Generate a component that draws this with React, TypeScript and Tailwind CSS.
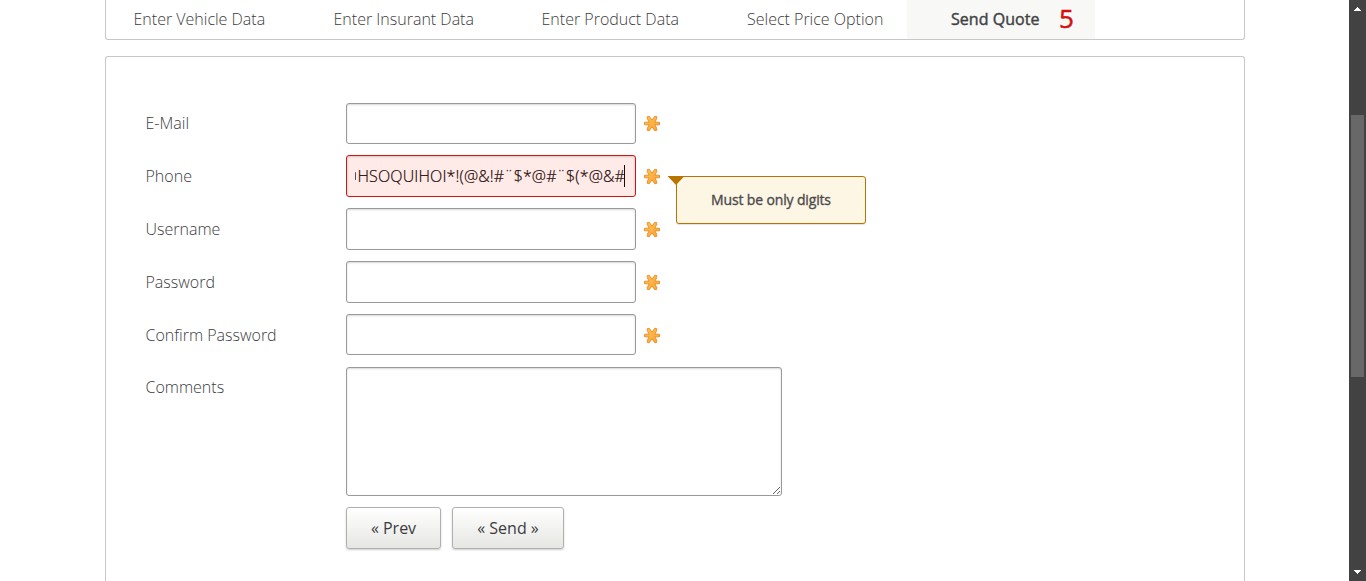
const tabs = [
  { label: "Enter Vehicle Data", cls: "ml-[27.5px] w-[200px]" },
  { label: "Enter Insurant Data", cls: "w-[208px]" },
  { label: "Enter Product Data", cls: "w-[205.5px]" },
  { label: "Select Price Option", cls: "w-[160px]" },
];

const fields = [
  { label: "E-Mail", row: "h-[52px]", box: "h-[41px]", text: "pt-2", star: "mt-3" },
  { label: "Phone", row: "h-[53px]", box: "h-[42px]", text: "pt-[9px]", star: "mt-[13px]", value: "HSOQUIHOI*!(@&!#¨$*@#¨$(*@&#", error: "Must be only digits" },
  { label: "Username", row: "h-[53px]", box: "h-[42px]", text: "pt-[9px]", star: "mt-[13px]" },
  { label: "Password", row: "h-[53px]", box: "h-[42px]", text: "pt-[9px]", star: "mt-[13px]" },
  { label: "Confirm Password", row: "h-[53px]", box: "h-[41px]", text: "pt-[9px]", star: "mt-[13px]" },
];

function Required({ className }: { className: string }) {
  return (
    <svg className={`ml-2 h-[17px] w-4 shrink-0 ${className}`} viewBox="0 0 16 17">
      <defs>
        <linearGradient id="star" x1="0" y1="0" x2="1" y2="1">
          <stop offset="0" stopColor="#ffc258" />
          <stop offset="1" stopColor="#fca232" />
        </linearGradient>
      </defs>
      <path
        d="M3.4 1.5 5.3 1.3 8 5.2 10.7 1.3 12.6 1.5 12.9 3.3 10.9 7.2H15.5V9.8H10.9L12.9 13.7 12.6 15.5 10.7 15.7 8 11.8 5.3 15.7 3.4 15.5 3.1 13.7 5.1 9.8H.5V7.2H5.1L3.1 3.3Z"
        fill="url(#star)"
        stroke="#e0851c"
        strokeWidth=".8"
      />
    </svg>
  );
}

function Tooltip({ text }: { text: string }) {
  return (
    <div className="absolute top-[21px] left-[330px] flex h-12 w-[190px] items-center justify-center rounded-[3px] border border-[#b87400] bg-[#fef6e4] pb-0.5 text-[14px] font-normal tracking-[-0.15px] text-[#4b4b4d] shadow-[0_1px_1px_rgba(0,0,0,0.12)] [-webkit-text-stroke:0.35px_#4b4b4d]">
      <svg className="absolute -top-px -left-[10px] h-[9px] w-[18px]" viewBox="0 0 18 9">
        <path d="M.5 0H17.5L9 9Z" fill="#b87400" />
      </svg>
      {text}
    </div>
  );
}

export default function App() {
  return (
    <div className="flex h-[581px] w-full overflow-hidden bg-white font-['Open_Sans',sans-serif] text-[16px] font-light text-[#3c3c3e]">
      <main className="ml-[105px] w-[1140px] shrink-0">
        <nav className="flex h-10 items-stretch rounded-b-[3px] border border-t-0 border-[#c8c8c8]">
          {tabs.map((t) => (
            <div key={t.label} className={`${t.cls} shrink-0 pt-[7px] whitespace-nowrap`}>{t.label}</div>
          ))}
          <div className="flex w-[188px] bg-[#f8f8f7] pl-11">
            <span className="w-[108px] pt-[7px] font-normal tracking-[0.05px] whitespace-nowrap [-webkit-text-stroke:0.45px_#4b4b4d]">Send Quote</span>
            <span className="text-[26px] leading-9 font-normal text-[#d40f0f] [-webkit-text-stroke:0.5px_#d40f0f]">5</span>
          </div>
        </nav>
        <section className="mt-4 h-[540px] rounded-t-[3px] border border-b-0 border-[#c8c8c8] pt-[46px] pl-10">
          {fields.map((f) => (
            <div key={f.label} className={`relative flex items-start ${f.row}`}>
              <label className={`-ml-[0.5px] w-[200.5px] shrink-0 ${f.text}`}>{f.label}</label>
              {f.value ? (
                <div className={`flex w-[290px] shrink-0 rounded-[3px] border border-[#d41414] bg-[#feebe8] px-2 text-[#260606] shadow-[inset_0_1px_2px_rgba(0,0,0,0.16)] ${f.box}`}>
                  <div className="flex w-full items-center justify-end overflow-hidden whitespace-nowrap">
                    <span className="mr-px h-2 w-px shrink-0 rounded-full bg-[#456]" />
                    <span className="tracking-[0.13px] [-webkit-text-stroke:0.2px_#260606]">{f.value}</span>
                    <span className="-ml-px mr-0.5 h-[22px] w-px shrink-0 bg-[#260606]" />
                  </div>
                </div>
              ) : (
                <input aria-label={f.label} className={`w-[290px] shrink-0 rounded-[3px] border border-[#999] bg-white px-[9px] shadow-[inset_0_1px_2px_rgba(0,0,0,0.16)] ${f.box}`} />
              )}
              <Required className={f.star} />
              {f.error && (
                <div className="absolute top-0 left-[200px]"><Tooltip text={f.error} /></div>
              )}
            </div>
          ))}
          <div className="flex items-start">
            <label className="-ml-[0.5px] w-[200.5px] pt-2">Comments</label>
            <textarea aria-label="Comments" className="block h-[129px] w-[436px] resize rounded-[3px] border border-[#999] bg-white shadow-[inset_0_1px_2px_rgba(0,0,0,0.16)]" />
          </div>
          <div className="mt-[11px] ml-[200px] flex gap-[11px] font-normal">
            <button className="h-[42px] w-[95px] rounded-[3px] border border-[#b0b0b0] bg-linear-to-b from-white to-[#e6e6e3] shadow-[0_1px_2px_rgba(0,0,0,0.2)]">« Prev</button>
            <button className="h-[42px] w-[112px] rounded-[3px] border border-[#b0b0b0] bg-linear-to-b from-white to-[#e6e6e3] shadow-[0_1px_2px_rgba(0,0,0,0.2)]">« Send »</button>
          </div>
        </section>
      </main>
      <aside className="ml-auto flex w-[17px] shrink-0 flex-col items-center bg-[#424242]">
        <svg className="mt-[7px] h-1 w-[7px]" viewBox="0 0 7 4" shapeRendering="crispEdges">
          <path d="M3 0H4V1H5V2H6V3H7V4H0V3H1V2H2V1H3Z" fill="white" />
        </svg>
        <div className="mt-[104px] h-[262px] w-[13px] bg-[#686868]" />
        <svg className="mt-auto mb-[7px] h-1 w-[7px]" viewBox="0 0 7 4" shapeRendering="crispEdges">
          <path d="M0 0H7V1H6V2H5V3H4V4H3V3H2V2H1V1H0Z" fill="white" />
        </svg>
      </aside>
    </div>
  );
}
